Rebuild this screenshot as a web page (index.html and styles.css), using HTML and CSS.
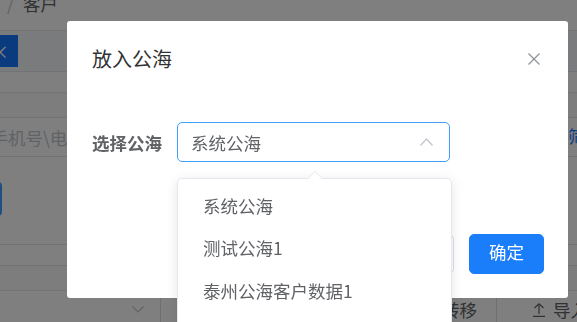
FILE: index.html
```html
<!DOCTYPE html>
<html lang="zh-CN">
	<head>
		<meta charset="UTF-8" />
		<meta name="viewport" content="width=device-width, initial-scale=1.0" />
		<title>放入公海</title>
		<link rel="stylesheet" href="styles.css">
	</head>
	<body>
		<section class="page">
			<div class="crumb">
				<span>客户管理</span><span class="sep">/</span><span>客户</span>
			</div>
			<div class="tabs"><span class="tab-active">×</span></div>
			<div class="strip"></div>
			<div class="strip strip-b"></div>
			<div class="search">
				<span class="search-input">请输入手机号\电话</span>
				<a class="more">常用筛选</a>
			</div>
			<div class="actions"><span class="btn-outline">新增客户</span></div>
			<div class="strip"></div>
			<div class="strip strip-b"></div>
			<div class="table-head">
				<span class="filter-select">
					<svg width="12" height="7" viewBox="0 0 12 7"><polyline points="0.5,0.5 6,6 11.5,0.5" fill="none" stroke="#c0c4cc" stroke-width="1.2"/></svg>
				</span>
				<span class="tool tool-move">批量转移</span>
				<span class="tool tool-import">
					<svg width="12" height="14" viewBox="0 0 12 14"><polyline points="1.5,5 6,0.8 10.5,5" fill="none" stroke="#606266" stroke-width="1.2"/><line x1="6" y1="1" x2="6" y2="11" stroke="#606266" stroke-width="1.2"/><line x1="0" y1="13.4" x2="12" y2="13.4" stroke="#606266" stroke-width="1.2"/></svg>
					导入
				</span>
			</div>
		</section>

		<div class="mask"></div>

		<div class="dialog">
			<div class="dialog-header">
				<span class="dialog-title">放入公海</span>
				<svg class="dialog-close" width="12" height="12" viewBox="0 0 12 12"><line x1="0.5" y1="0.5" x2="11.5" y2="11.5" stroke="#909399" stroke-width="1.3"/><line x1="11.5" y1="0.5" x2="0.5" y2="11.5" stroke="#909399" stroke-width="1.3"/></svg>
			</div>
			<div class="dialog-body">
				<div class="form-item">
					<label class="form-label">选择公海</label>
					<div class="select">
						<span>系统公海</span>
						<svg width="13" height="8" viewBox="0 0 13 8"><polyline points="0.5,7.5 6.5,1 12.5,7.5" fill="none" stroke="#c0c4cc" stroke-width="1.2"/></svg>
					</div>
				</div>
			</div>
			<div class="dialog-footer">
				<button class="btn">取消</button>
				<button class="btn btn-primary">确定</button>
			</div>
		</div>

		<div class="dropdown">
			<ul>
				<li>系统公海</li>
				<li>测试公海1</li>
				<li>泰州公海客户数据1</li>
			</ul>
		</div>
	</body>
</html>
```

FILE: styles.css
```css
* {
	box-sizing: border-box;
	margin: 0;
	padding: 0;
}

body {
	width: 577px;
	height: 322px;
	overflow: hidden;
	background-color: #fff;
	color: #606266;
	font-family: "Noto Sans CJK SC", "Noto Sans", sans-serif;
	font-size: 17.5px;
}

.page {
	display: flex;
	flex-direction: column;
}

.crumb {
	height: 38px;
	margin-top: -7px;
	margin-left: -72px;
	display: flex;
	align-items: flex-start;
	line-height: 20px;
	padding-top: 1px;
	border-bottom: 1px solid #e4e7ed;
}

.crumb .sep {
	margin: 0 9px;
	color: #c0c4cc;
}

.tabs {
	height: 41px;
	display: flex;
	align-items: flex-start;
	background-color: #f5f7fa;
	border-bottom: 1px solid #e4e7ed;
}

.tab-active {
	margin-top: 4px;
	margin-left: -18px;
	width: 36px;
	height: 32px;
	display: flex;
	align-items: center;
	justify-content: center;
	background-color: #1677ff;
	color: #fff;
	font-size: 18px;
}

.strip {
	height: 21px;
	border-bottom: 1px solid #e4e7ed;
}

.strip-b {
	height: 25px;
	background-color: #fafafa;
}

.search {
	height: 39px;
	display: flex;
	align-items: center;
	justify-content: space-between;
	border-bottom: 1px solid #e4e7ed;
}

.search-input {
	margin-left: -62px;
	color: #c0c4cc;
	white-space: nowrap;
}

.more {
	margin-right: -26px;
	color: #1677ff;
	white-space: nowrap;
	margin-top: -4px;
}

.actions {
	height: 88px;
	display: flex;
	align-items: flex-start;
	border-bottom: 1px solid #e4e7ed;
}

.btn-outline {
	margin-top: 25px;
	margin-left: -80px;
	width: 82px;
	height: 34px;
	border: 2px solid #409eff;
	border-radius: 4px;
	background-color: #ecf5ff;
	color: #409eff;
	font-size: 14px;
}

.table-head {
	height: 37px;
	margin-right: -40px;
	display: flex;
	align-items: center;
}

.filter-select {
	margin-left: -40px;
	width: 201px;
	height: 37px;
	display: flex;
	align-items: center;
	justify-content: flex-end;
	padding-right: 16px;
	border-right: 1px solid #dcdfe6;
}

.tool {
	height: 37px;
	display: flex;
	align-items: center;
	white-space: nowrap;
}

.tool-move {
	margin-left: auto;
	width: 120px;
	justify-content: flex-end;
	padding-right: 19px;
	border-right: 1px solid #dcdfe6;
}

.tool-import {
	width: 120px;
	padding-left: 36px;
	gap: 8px;
}

.mask {
	position: fixed;
	inset: 0;
	background-color: rgba(0, 0, 0, 0.5);
}

.dialog {
	position: fixed;
	left: 67px;
	top: 21px;
	width: 501px;
	height: 277px;
	display: flex;
	flex-direction: column;
	background-color: #fff;
	border-radius: 3px;
}

.dialog-header {
	display: flex;
	align-items: center;
	justify-content: space-between;
	padding: 26px 28px 0 25px;
}

.dialog-title {
	font-size: 20px;
	line-height: 24px;
	color: #303133;
}

.dialog-body {
	padding: 51px 25px 0;
}

.form-item {
	display: flex;
	align-items: center;
}

.form-label {
	width: 85px;
	font-weight: 700;
	color: #606266;
}

.select {
	width: 273px;
	height: 40px;
	display: flex;
	align-items: center;
	justify-content: space-between;
	padding: 0 16px 0 13px;
	border: 1px solid #409eff;
	border-radius: 5px;
	color: #606266;
}

.dialog-footer {
	margin-top: auto;
	display: flex;
	justify-content: flex-end;
	gap: 15px;
	padding: 0 24px 24px;
}

.btn {
	width: 75px;
	height: 40px;
	padding-bottom: 4px;
	border: 1px solid #dcdfe6;
	border-radius: 5px;
	background-color: #fff;
	color: #606266;
	font-family: inherit;
	font-size: 17.5px;
	line-height: 1;
}

.btn-primary {
	border-color: #1a7efb;
	background-color: #1a7efb;
	color: #fff;
}

.dropdown {
	position: fixed;
	left: 177px;
	top: 178px;
	width: 275px;
	height: 160px;
	padding: 5.5px 0;
	background-color: #fff;
	border: 1px solid #e4e7ed;
	border-radius: 5px;
	box-shadow: 0 2px 12px rgba(0, 0, 0, 0.1);
}

.dropdown::before,
.dropdown::after {
	content: "";
	position: absolute;
	left: 50%;
	margin-left: -8px;
	border: 8px solid transparent;
	border-top-width: 0;
}

.dropdown::before {
	top: -8px;
	border-bottom-color: #e4e7ed;
}

.dropdown::after {
	top: -7px;
	border-bottom-color: #fff;
}

.dropdown ul {
	list-style: none;
}

.dropdown li {
	height: 42.5px;
	line-height: 42.5px;
	padding: 0 25px;
	color: #606266;
	white-space: nowrap;
}
```
